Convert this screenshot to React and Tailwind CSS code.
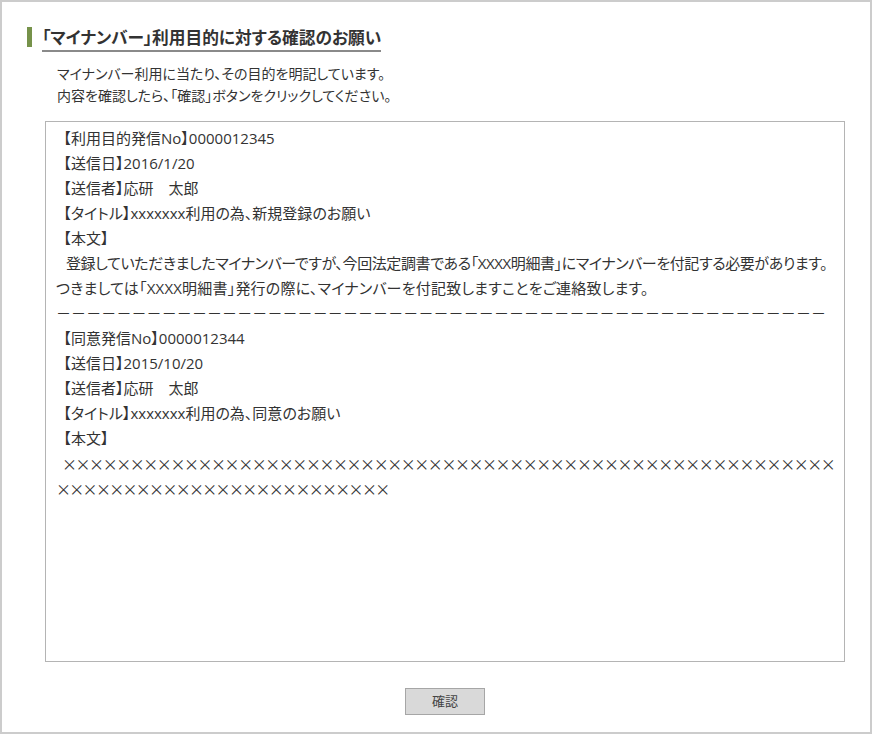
import React from 'react'

const FONT = "font-['Open_Sans','Noto_Sans_CJK_JP',sans-serif] [font-feature-settings:'palt']"

const DASHES = '－'.repeat(51)
const CROSS1 = '×'.repeat(57)
const CROSS2 = '×'.repeat(25)

// 【は全角幅のまま、】は詰める
const Label = ({ children }) => (
  <>
    <span className="[font-feature-settings:normal]">【</span>
    {children}
    】
  </>
)

export default function App() {
  return (
    <div className={`${FONT} w-[872px] h-[734px] border-2 border-[#cccccc] bg-white text-[#333333] flex flex-col`}>
      {/* タイトル */}
      <div className="flex items-center mt-[25px] ml-[25px] h-[20px]">
        <span className="w-[5px] h-[20px] bg-[#76924a]" />
        <h1 className="ml-[10px] text-[16.7px] font-bold leading-[20px] border-b-2 border-[#8a8a8a] pb-[2px] mt-[6px] whitespace-nowrap">
          「マイナンバー」利用目的に対する確認のお願い
        </h1>
      </div>

      {/* 説明 */}
      <div className="ml-[55px] mt-[16px] text-[14px] leading-[22px]">
        <p>マイナンバー利用に当たり、その目的を明記しています。</p>
        <p>内容を確認したら、「確認」ボタンをクリックしてください。</p>
      </div>

      {/* 内容 */}
      <div className="ml-[43px] mt-[14px] w-[800px] h-[541px] border border-[#b4b4b4] pt-[4px] pl-[10px] text-[15px] leading-[25px] overflow-hidden whitespace-nowrap">
        <p><Label>利用目的発信No</Label>0000012345</p>
        <p><Label>送信日</Label>2016/1/20</p>
        <p><Label>送信者</Label>応研　太郎</p>
        <p><Label>タイトル</Label>xxxxxxx利用の為、新規登録のお願い</p>
        <p><Label>本文</Label></p>
        <p className="pl-[10px] tracking-[-0.4px]">登録していただきましたマイナンバーですが、今回法定調書である「XXXX明細書」にマイナンバーを付記する必要があります。</p>
        <p className="tracking-[0.2px]">つきましては「XXXX明細書」発行の際に、マイナンバーを付記致しますことをご連絡致します。</p>
        <p className="tracking-[0.1px]">{DASHES}</p>
        <p><Label>同意発信No</Label>0000012344</p>
        <p><Label>送信日</Label>2015/10/20</p>
        <p><Label>送信者</Label>応研　太郎</p>
        <p><Label>タイトル</Label>xxxxxxx利用の為、同意のお願い</p>
        <p><Label>本文</Label></p>
        <p className="font-['Noto_Sans_CJK_JP',sans-serif] pl-[6px] tracking-[-1.45px]">{CROSS1}</p>
        <p className="font-['Noto_Sans_CJK_JP',sans-serif] tracking-[-1.7px]">{CROSS2}</p>
      </div>

      {/* ボタン */}
      <div className="ml-[43px] w-[800px] flex justify-center mt-[26px]">
        <button
          type="button"
          className="w-[80px] h-[27px] bg-[#d9d9d9] border border-[#a6a6a6] text-[13px] text-[#444444] leading-none"
        >
          確認
        </button>
      </div>
    </div>
  )
}
